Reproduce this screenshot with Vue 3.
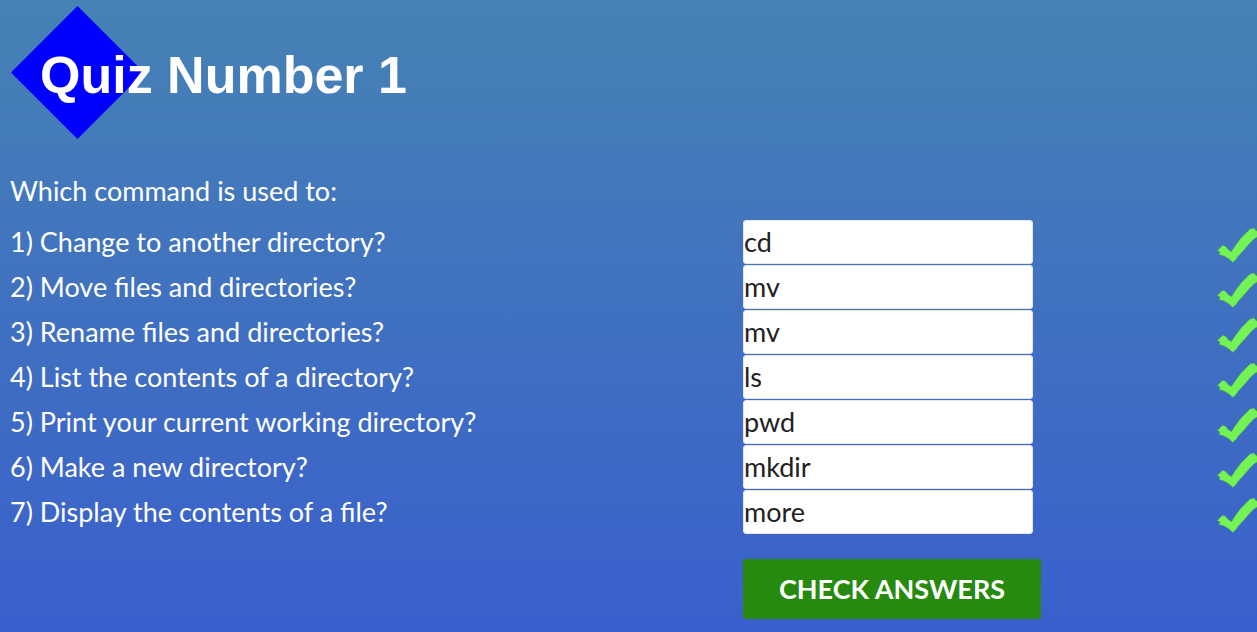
<script setup>
import { ref } from 'vue'

const questions = ref([
  { text: '1) Change to another directory?', answer: 'cd', solution: 'cd' },
  { text: '2) Move files and directories?', answer: 'mv', solution: 'mv' },
  { text: '3) Rename files and directories?', answer: 'mv', solution: 'mv' },
  { text: '4) List the contents of a directory?', answer: 'ls', solution: 'ls' },
  { text: '5) Print your current working directory?', answer: 'pwd', solution: 'pwd' },
  { text: '6) Make a new directory?', answer: 'mkdir', solution: 'mkdir' },
  { text: '7) Display the contents of a file?', answer: 'more', solution: 'more' }
])

const results = ref(questions.value.map(() => true))

function checkAnswers() {
  results.value = questions.value.map((q) => q.answer.trim() === q.solution)
}
</script>

<template>
  <main class="quiz">
    <header class="banner">
      <svg class="diamond" viewBox="0 0 132 132" aria-hidden="true">
        <path d="M66 0 132 66 66 132 0 66Z" fill="#0000ff" />
      </svg>
      <h1 class="title">Quiz Number 1</h1>
    </header>

    <p class="intro">Which command is used to:</p>

    <form @submit.prevent="checkAnswers">
      <div v-for="(q, i) in questions" :key="i" class="row">
        <label class="question" :for="'answer-' + i">{{ q.text }}</label>
        <input :id="'answer-' + i" v-model="q.answer" class="answer" type="text" autocomplete="off" spellcheck="false" />
        <svg v-if="results[i]" class="tick" viewBox="0 0 40 36" role="img" aria-label="Correct">
          <path
            d="M0.3 23.5 5.5 18.3 9 19.5 11 22.5 14.5 24.5 18 19 24 11 29 6 33 2 37 1 39 3.5 41 4 V9.5 L37 12 33 16 27 23 21 29.5 19.5 32 15.8 35.6 12 32 7 29 2 27.5 3 25Z"
            fill="#73f354"
            stroke="#4f9a72"
            stroke-width="0.6"
          />
        </svg>
      </div>
      <div class="row actions">
        <button class="check" type="submit">CHECK ANSWERS</button>
      </div>
    </form>
  </main>
</template>

<style>
body {
  margin: 0;
}
</style>

<style scoped>
.quiz {
  box-sizing: border-box;
  min-height: 100vh;
  padding: 6px 0 13px 10px;
  background: linear-gradient(#4682b4, #3a5fcd);
  color: #fff;
  font-family: Lato, "Liberation Sans", sans-serif;
  font-size: 27px;
  line-height: 44px;
}

.banner {
  display: grid;
  align-items: center;
  padding-left: 1px;
}

.diamond,
.title {
  grid-area: 1 / 1;
}

.diamond {
  width: 133px;
  height: 133px;
}

.title {
  margin: 0;
  padding: 4px 0 0 29px;
  font: bold 52px/60px "Liberation Sans", Arial, sans-serif;
}

.intro {
  margin: 30px 0 7px;
}

.row {
  display: grid;
  grid-template-columns: 733fr 474fr 40fr;
  align-items: center;
  margin-bottom: 1px;
}

.answer {
  box-sizing: border-box;
  width: 290px;
  height: 44px;
  padding: 0;
  border: 1px solid #e6e6e6;
  border-radius: 3px;
  background: #fff;
  color: #222;
  font: inherit;
}

.tick {
  width: 40px;
  height: 36px;
  margin-top: 6px;
}

.actions {
  margin: 25px 0 0;
}

.check {
  grid-column: 2;
  justify-self: start;
  width: 298px;
  height: 60px;
  padding: 0;
  border: 0;
  border-radius: 3px;
  background: #268a0e;
  color: #fff;
  font: bold 27px/60px Lato, "Liberation Sans", sans-serif;
  cursor: pointer;
}
</style>
